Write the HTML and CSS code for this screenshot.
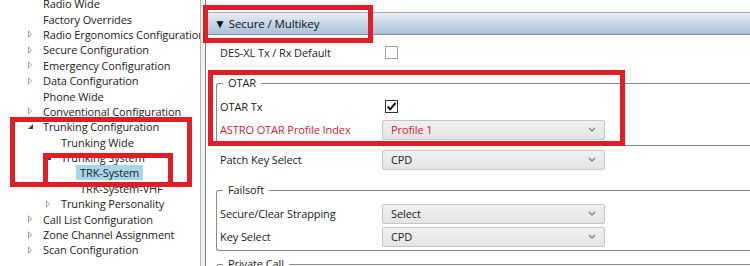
FILE: index.html
```html
<!DOCTYPE html>
<html lang="en">
<head>
    <meta charset="UTF-8">
    <title>Codeplug Editor - Secure / Multikey</title>
    <link rel="stylesheet" href="styles.css">
</head>
<body>
    <div class="window">
        <aside class="tree">
            <div class="node l1"><span class="tw"></span><span class="txt">Radio Wide</span></div>
            <div class="node l1"><span class="tw"></span><span class="txt">Factory Overrides</span></div>
            <div class="node l1"><span class="tw closed"></span><span class="txt">Radio Ergonomics Configuration</span></div>
            <div class="node l1"><span class="tw closed"></span><span class="txt">Secure Configuration</span></div>
            <div class="node l1"><span class="tw closed"></span><span class="txt">Emergency Configuration</span></div>
            <div class="node l1"><span class="tw closed"></span><span class="txt">Data Configuration</span></div>
            <div class="node l1"><span class="tw"></span><span class="txt">Phone Wide</span></div>
            <div class="node l1"><span class="tw closed"></span><span class="txt">Conventional Configuration</span></div>
            <div class="node l1"><span class="tw open"></span><span class="txt">Trunking Configuration</span></div>
            <div class="node l2"><span class="tw"></span><span class="txt">Trunking Wide</span></div>
            <div class="node l2"><span class="tw open"></span><span class="txt">Trunking System</span></div>
            <div class="node l3"><span class="tw"></span><span class="txt selected">TRK-System</span></div>
            <div class="node l3"><span class="tw"></span><span class="txt">TRK-System-VHF</span></div>
            <div class="node l2"><span class="tw closed"></span><span class="txt">Trunking Personality</span></div>
            <div class="node l1"><span class="tw closed"></span><span class="txt">Call List Configuration</span></div>
            <div class="node l1"><span class="tw closed"></span><span class="txt">Zone Channel Assignment</span></div>
            <div class="node l1"><span class="tw closed"></span><span class="txt">Scan Configuration</span></div>
        </aside>

        <div class="splitter"></div>

        <main class="props">
            <div class="section-head"><span class="caret">&#9660;</span>Secure / Multikey</div>

            <div class="row first">
                <span class="label">DES-XL Tx / Rx Default</span>
                <span class="check"></span>
            </div>

            <fieldset class="group otar">
                <legend>OTAR</legend>
                <div class="row">
                    <span class="label">OTAR Tx</span>
                    <span class="check on">
                        <svg viewBox="0 0 13 13" width="13" height="13"><polyline points="2.5,6.5 5.2,9.3 10.5,3" fill="none" stroke="#111" stroke-width="2"/></svg>
                    </span>
                </div>
                <div class="row alert">
                    <span class="label">ASTRO OTAR Profile Index</span>
                    <span class="select">Profile 1<svg class="chev" viewBox="0 0 8 5" width="8" height="5"><polyline points="1,1 4,4 7,1" fill="none" stroke="#777" stroke-width="1.2"/></svg></span>
                </div>
            </fieldset>

            <div class="row patch">
                <span class="label">Patch Key Select</span>
                <span class="select">CPD<svg class="chev" viewBox="0 0 8 5" width="8" height="5"><polyline points="1,1 4,4 7,1" fill="none" stroke="#777" stroke-width="1.2"/></svg></span>
            </div>

            <fieldset class="group failsoft">
                <legend>Failsoft</legend>
                <div class="row">
                    <span class="label">Secure/Clear Strapping</span>
                    <span class="select">Select<svg class="chev" viewBox="0 0 8 5" width="8" height="5"><polyline points="1,1 4,4 7,1" fill="none" stroke="#777" stroke-width="1.2"/></svg></span>
                </div>
                <div class="row">
                    <span class="label">Key Select</span>
                    <span class="select">CPD<svg class="chev" viewBox="0 0 8 5" width="8" height="5"><polyline points="1,1 4,4 7,1" fill="none" stroke="#777" stroke-width="1.2"/></svg></span>
                </div>
            </fieldset>

            <fieldset class="group private">
                <legend>Private Call</legend>
            </fieldset>
        </main>

        <!-- red callouts drawn over the screenshot -->
        <div class="mark mark-head"></div>
        <div class="mark mark-trunk"></div>
        <div class="mark mark-sys"></div>
        <div class="mark mark-otar"></div>
    </div>
</body>
</html>
```

FILE: styles.css
```css
body {
    margin: 0;
    background-color: #fff;
    font-family: 'Open Sans', 'Noto Sans', sans-serif;
    font-size: 11px;
    letter-spacing: -0.1px;
    color: #222;
}
.window {
    position: relative;
    display: flex;
    width: 750px;
    height: 266px;
    overflow: hidden;
}

/* tree on the left */
.tree {
    width: 200px;
    flex-shrink: 0;
    margin-top: -4px;
    white-space: nowrap;
    overflow: hidden;
}
.node {
    display: flex;
    align-items: center;
    height: 15.4px;
}
.l1 { padding-left: 28px; }
.l2 { padding-left: 46px; }
.l3 { padding-left: 65px; }
.tw {
    width: 15px;
    height: 8px;
    flex-shrink: 0;
    position: relative;
}
.tw.closed::before {
    content: "";
    position: absolute;
    left: 0;
    top: 0;
    border-left: 4px solid #a0a0a0;
    border-top: 4px solid transparent;
    border-bottom: 4px solid transparent;
}
.tw.closed::after {
    content: "";
    position: absolute;
    left: 1px;
    top: 2px;
    border-left: 2px solid #fff;
    border-top: 2px solid transparent;
    border-bottom: 2px solid transparent;
}
.tw.open::before {
    content: "";
    position: absolute;
    left: 0;
    top: 1px;
    border-right: 5px solid #404040;
    border-top: 5px solid transparent;
}
.txt.selected {
    background-color: #a9d5e9;
    padding: 0 4px;
    margin-left: -4px;
}

.splitter {
    width: 4px;
    flex-shrink: 0;
    background-color: #f2f2f2;
    border-left: 1px solid #b4b4b4;
    border-right: 1px solid #7c7c7c;
}

/* property grid on the right */
.props {
    flex: 1;
    padding-top: 12px;
}
.section-head {
    height: 21px;
    line-height: 21px;
    padding-left: 8px;
    border-top: 1px solid #a8a8a8;
    border-bottom: 1px solid #80909f;
    background: linear-gradient(#e9f0f6, #c8d9e7 45%, #a9c2d7);
    color: #111;
    font-size: 11.5px;
}
.caret {
    font-size: 12px;
    margin-right: 3px;
}
.row {
    display: flex;
    align-items: center;
    height: 23px;
    padding-left: 14px;
}
.row.first {
    height: 20px;
    margin-top: 7px;
}
.label {
    width: 162px;
    flex-shrink: 0;
}
.check {
    width: 11px;
    height: 11px;
    margin-left: 3px;
    border: 1px solid #a0a0a0;
    background-color: #fff;
    position: relative;
}
.check.on {
    border: 1px solid #333;
}
.check svg {
    position: absolute;
    left: -1px;
    top: -1px;
}
.select {
    box-sizing: border-box;
    display: flex;
    align-items: center;
    justify-content: space-between;
    width: 223px;
    height: 20px;
    padding: 0 8px 0 8px;
    border: 1px solid #c6c6c6;
    border-radius: 2px;
    background: linear-gradient(#f1f1f1, #e4e4e4);
}
.alert .label,
.alert .select {
    color: #d42230;
}

/* group boxes */
.group {
    margin: 0 0 0 10px;
    padding: 0;
    border: 1px solid #8a8a8a;
    border-right: none;
    border-radius: 3px 0 0 3px;
}
.group legend {
    padding: 0 5px;
    margin-left: 6px;
    line-height: 16px;
}
.group .row {
    padding-left: 3px;
}
.otar {
    margin-top: 13px;
    padding: 4px 0 4px;
}
.row.patch {
    margin-top: 2px;
}
.failsoft {
    margin-top: 11px;
    padding: 4px 0 2px;
}
.private {
    margin-top: 5px;
    height: 30px;
}

/* red annotation boxes */
.mark {
    position: absolute;
    border: 5px solid #e31d25;
    box-sizing: border-box;
}
.mark-head {
    left: 203px;
    top: 5px;
    width: 170px;
    height: 38px;
}
.mark-trunk {
    left: 10px;
    top: 117px;
    width: 182px;
    height: 70px;
}
.mark-sys {
    left: 43px;
    top: 153px;
    width: 130px;
    height: 34px;
}
.mark-otar {
    left: 208px;
    top: 70px;
    width: 417px;
    height: 76px;
}
```
